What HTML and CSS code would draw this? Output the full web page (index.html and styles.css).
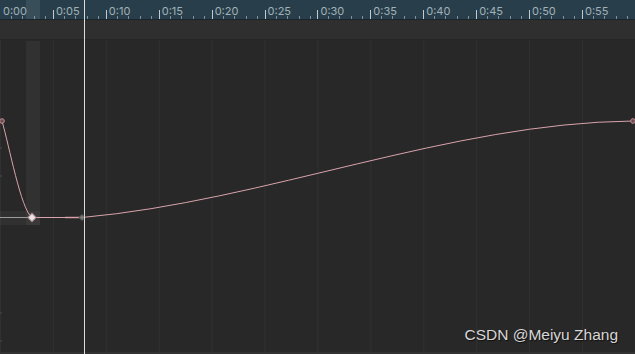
FILE: index.html
```html
<!DOCTYPE html>
<html lang="en">
<head>
    <meta charset="UTF-8">
    <title>Curve Editor</title>
    <link rel="stylesheet" href="styles.css">
</head>
<body>
    <div class="editor">
        <div class="ruler">
            <div class="seg first"><span>0:00</span></div>
            <div class="seg"><span>0:05</span></div>
            <div class="seg"><span>0:10</span></div>
            <div class="seg"><span>0:15</span></div>
            <div class="seg"><span>0:20</span></div>
            <div class="seg"><span>0:25</span></div>
            <div class="seg"><span>0:30</span></div>
            <div class="seg"><span>0:35</span></div>
            <div class="seg"><span>0:40</span></div>
            <div class="seg"><span>0:45</span></div>
            <div class="seg"><span>0:50</span></div>
            <div class="seg"><span>0:55</span></div>
        </div>
        <div class="events"></div>
        <div class="curves"></div>

        <!-- selection highlight -->
        <div class="sel-ruler"></div>
        <div class="sel-col"></div>
        <div class="sel-row"></div>

        <svg class="graph" width="635" height="354" viewBox="0 0 635 354">
            <g class="axis">
                <line x1="0" y1="148" x2="2" y2="148"/>
                <line x1="0" y1="176" x2="2" y2="176"/>
                <line x1="0" y1="313" x2="2" y2="313"/>
                <line x1="0" y1="341" x2="2" y2="341"/>
            </g>
            <line class="tangent" x1="0" y1="217.5" x2="32" y2="217.5"/>
            <line class="handle" x1="65" y1="217.5" x2="82" y2="217.5"/>
            <path class="curve" d="M2 121 C9 145 21 210 32 217.5 L82 217.5 C266 201 449 123 633 121"/>
            <circle class="key-pink" cx="2" cy="121" r="2.3"/>
            <circle class="key-pink" cx="633" cy="121" r="2.3"/>
            <rect class="key-sel" x="29" y="214.5" width="6" height="6" transform="rotate(45 32 217.5)"/>
            <rect class="key-gray" x="80" y="215.5" width="4" height="4" transform="rotate(45 82 217.5)"/>
        </svg>

        <div class="playhead"></div>
        <div class="watermark">CSDN @Meiyu Zhang</div>
    </div>
</body>
</html>
```

FILE: styles.css
```css
* {
    margin: 0;
    padding: 0;
    box-sizing: border-box;
}

body {
    background-color: #282828;
    font-family: 'Inter', 'DejaVu Sans', sans-serif;
    overflow: hidden;
}

.editor {
    position: relative;
    width: 635px;
    height: 354px;
    display: flex;
    flex-direction: column;
    overflow: hidden;
}

.ruler {
    display: flex;
    height: 20px;
    flex: none;
    background-color: #283f4b;
    border-bottom: 1px solid #1c2529;
}

.seg {
    position: relative;
    flex: none;
    width: 52.92px;
    height: 19px;
    font-size: 11px;
    color: #a3b1b8;
    background-image: repeating-linear-gradient(to right, transparent 0, transparent 10.58px, #7d929c 10.58px, #7d929c 11.58px);
    background-size: 100% 3px;
    background-position: 0 16px;
    background-repeat: no-repeat;
}

.seg span {
    position: absolute;
    left: 3px;
    top: 4px;
}

.seg::before {
    content: '';
    position: absolute;
    left: 0;
    top: 10px;
    width: 1px;
    height: 9px;
    background-color: #c3cbcf;
}

.seg.first::before {
    display: none;
}

.events {
    height: 20px;
    flex: none;
    background-color: #2f2f2f;
    border-bottom: 1px solid #252525;
}

.curves {
    flex: 1;
    background-color: #282828;
    background-image: linear-gradient(to right, #303030 1px, transparent 1px);
    background-size: 52.92px 100%;
    border-bottom: 2px solid #323232;
}

.sel-ruler {
    position: absolute;
    left: 26px;
    top: 0;
    width: 14px;
    height: 19px;
    background-color: rgba(255, 255, 255, 0.08);
}

.sel-col {
    position: absolute;
    left: 26px;
    top: 41px;
    width: 14px;
    height: 184px;
    background-color: rgba(255, 255, 255, 0.045);
}

.sel-row {
    position: absolute;
    left: 0;
    top: 211px;
    width: 40px;
    height: 14px;
    background-color: rgba(255, 255, 255, 0.04);
}

.graph {
    position: absolute;
    left: 0;
    top: 0;
}

.axis line {
    stroke: #4a4a4a;
    stroke-width: 1;
}

.tangent {
    stroke: #9c9c9c;
    stroke-width: 1;
}

.handle {
    stroke: #b08088;
    stroke-width: 1.6;
}

.curve {
    fill: none;
    stroke: #d9a3ab;
    stroke-width: 1;
}

.key-pink {
    fill: #6a4c50;
    stroke: #c68e96;
    stroke-width: 1;
}

.key-sel {
    fill: #efe2e3;
    stroke: #9b8486;
    stroke-width: 1;
}

.key-gray {
    fill: #7c7c7c;
    stroke: #5c5c5c;
    stroke-width: 1;
}

.playhead {
    position: absolute;
    left: 84px;
    top: 0;
    width: 1px;
    height: 354px;
    background-color: #dcdcdc;
}

.watermark {
    position: absolute;
    right: 17px;
    bottom: 10px;
    font-family: 'Liberation Sans', Arial, sans-serif;
    font-size: 15.5px;
    color: #d6d6d6;
    text-shadow: 1px 1px 1px rgba(0, 0, 0, 0.6);
}
```
